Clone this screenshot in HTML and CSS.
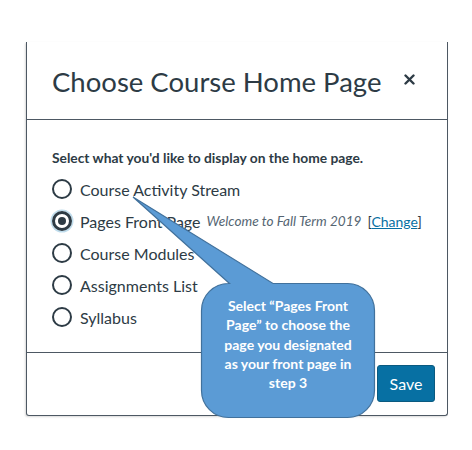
FILE: index.html
```html
<!DOCTYPE html>
<html lang="en">
<head>
<meta charset="utf-8">
<title>Choose Course Home Page</title>
<link rel="stylesheet" href="styles.css">
</head>
<body>
<div class="dialog">
  <div class="dialog-header">
    <h1 class="dialog-title">Choose Course Home Page</h1>
    <button class="close-btn" aria-label="Close">
      <svg width="11" height="11" viewBox="0 0 11 11"><path d="M1.5 1.5 L9.5 9.5 M9.5 1.5 L1.5 9.5" stroke="#2d3b45" stroke-width="2.4" stroke-linecap="round"/></svg>
    </button>
  </div>
  <div class="dialog-body">
    <p class="prompt">Select what you'd like to display on the home page.</p>
    <ul class="options">
      <li class="option"><span class="radio"></span><span class="label">Course Activity Stream</span></li>
      <li class="option"><span class="radio checked"></span><span class="label">Pages Front Page</span><em class="page-name">Welcome to Fall Term 2019</em><span class="change">[<a href="#">Change</a>]</span></li>
      <li class="option"><span class="radio"></span><span class="label">Course Modules</span></li>
      <li class="option"><span class="radio"></span><span class="label">Assignments List</span></li>
      <li class="option"><span class="radio"></span><span class="label">Syllabus</span></li>
    </ul>
  </div>
  <div class="dialog-footer">
    <button class="save-btn">Save</button>
  </div>
</div>

<div class="callout">
  <svg class="callout-shape" width="472" height="450" viewBox="0 0 472 450">
    <path d="M229.5 283.5 L133 197 L273 283.5 L347.5 283.5 A27 27 0 0 1 374.5 310.5 L374.5 390.5 A27 27 0 0 1 347.5 417.5 L228.5 417.5 A27 27 0 0 1 201.5 390.5 L201.5 310.5 A27 27 0 0 1 228.5 283.5 Z" fill="#5b9bd5" stroke="#41719c" stroke-width="1.2"/>
  </svg>
  <div class="callout-text">Select “Pages Front Page” to choose the page you designated as your front page in step 3</div>
</div>
</body>
</html>
```

FILE: styles.css
```css
* { box-sizing: border-box; }

html, body {
  margin: 0;
  padding: 0;
  background: #ffffff;
}

body {
  width: 472px;
  height: 450px;
  position: relative;
  overflow: hidden;
  font-family: Lato, "Open Sans", sans-serif;
  color: #2d3b45;
}

.dialog {
  margin: 42px 0 0 26px;
  width: 422px;
  height: 374px;
  border: 1px solid #4d5863;
  border-top: none;
  border-radius: 0 0 3px 3px;
  box-shadow: -1px 1px 2px rgba(0,0,0,0.15);
  display: flex;
  flex-direction: column;
  background: #fff;
}

.dialog-header {
  height: 78px;
  border-bottom: 1px solid #4d5863;
  display: flex;
  align-items: center;
  padding: 0 32px 0 25px;
  justify-content: space-between;
}

.dialog-title {
  margin: 0;
  font-weight: 400;
  font-size: 27.5px;
  color: #2d3b45;
  padding-top: 2px;
}

.close-btn {
  border: none;
  background: none;
  padding: 0;
  width: 11px;
  height: 11px;
  display: flex;
  margin-top: -2px;
}

.dialog-body {
  height: 233px;
  border-bottom: 1px solid #4d5863;
  padding: 29px 25px 0 25px;
}

.prompt {
  margin: 0 0 12px 0;
  font-weight: 700;
  font-size: 13.8px;
  line-height: 18px;
}

.options {
  list-style: none;
  margin: 0;
  padding: 0;
  display: flex;
  flex-direction: column;
  gap: 12px;
}

.option {
  display: flex;
  align-items: center;
  height: 20px;
  font-size: 16px;
}

.radio {
  width: 20px;
  height: 20px;
  border: 2.5px solid #2d3b45;
  border-radius: 50%;
  margin-left: 0;
  margin-right: 8px;
  flex: none;
  position: relative;
}

.radio.checked {
  border: 3.5px solid #2d3b45;
  box-shadow: 0 0 0 1.5px rgba(0,118,184,0.25);
}

.radio.checked::after {
  content: "";
  position: absolute;
  left: 2.5px;
  top: 2.5px;
  width: 8px;
  height: 8px;
  border-radius: 50%;
  background: #2d3b45;
}

.label {
  white-space: nowrap;
}

.page-name {
  font-size: 13.6px;
  color: #556572;
  margin-left: 6px;
  white-space: nowrap;
}

.change {
  font-size: 14px;
  color: #2d3b45;
  margin-left: 6px;
}

.change a {
  color: #0770a3;
  text-decoration: underline;
}

.dialog-footer {
  flex: 1;
  display: flex;
  justify-content: flex-end;
  align-items: flex-start;
  padding: 12px 12px 0 0;
}

.save-btn {
  width: 58px;
  height: 37px;
  background: #0770a3;
  border: 1px solid #0a5a80;
  border-radius: 3px;
  color: #fff;
  font-family: Lato, sans-serif;
  font-size: 16px;
  padding: 0;
}

.callout {
  position: absolute;
  left: 0;
  top: 0;
  width: 472px;
  height: 450px;
  pointer-events: none;
}

.callout-shape {
  position: absolute;
  left: 0;
  top: 0;
}

.callout-text {
  position: absolute;
  left: 220px;
  top: 296px;
  width: 136px;
  text-align: center;
  color: #ffffff;
  font-family: Lato, "Open Sans", sans-serif;
  font-weight: 700;
  font-size: 14px;
  line-height: 19.3px;
}
```
